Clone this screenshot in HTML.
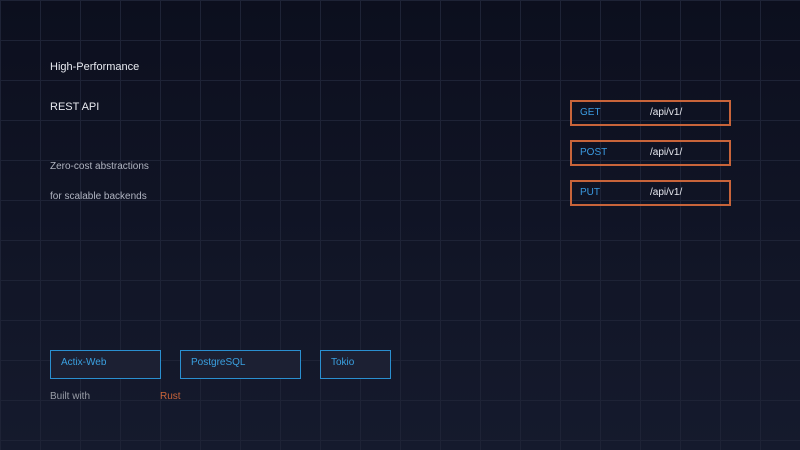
<!DOCTYPE html>
<html><head><style>
body{margin:0;width:800px;height:450px;overflow:hidden;font-family:"Liberation Sans",sans-serif;
background:linear-gradient(#0c0f1e,#151a2d);position:relative}
.grid{position:absolute;inset:0;background-image:linear-gradient(90deg,#1e2336 1px,transparent 1px),linear-gradient(#1e2336 1px,transparent 1px);background-size:40px 40px;background-position:0 0}
.t{position:absolute;font-size:11px;white-space:nowrap}
.r{position:absolute;left:570px;width:157px;height:22px;border:2px solid #c8643a;box-sizing:content-box}
.r span{position:absolute;top:5px;font-size:10px}
.b{position:absolute;top:350px;height:29px;border:1px solid #2a8fd0;background:#1c2033;box-sizing:border-box}
.b span{position:absolute;left:10px;top:6px;font-size:10px;color:#3aa0e0}
</style></head><body>
<div class="grid"></div>
<div class="t" style="left:50px;top:61px;color:#e8eaf0">High-Performance</div>
<div class="t" style="left:50px;top:101px;color:#e8eaf0">REST API</div>
<div class="t" style="left:50px;top:161px;color:#b0b4c0;font-size:10px">Zero-cost abstractions</div>
<div class="t" style="left:50px;top:191px;color:#b0b4c0;font-size:10px">for scalable backends</div>
<div class="r" style="top:100px"><span style="left:8px;color:#3a9ae0">GET</span><span style="left:78px;color:#e8eaf0">/api/v1/</span></div>
<div class="r" style="top:140px"><span style="left:8px;color:#3a9ae0">POST</span><span style="left:78px;color:#e8eaf0">/api/v1/</span></div>
<div class="r" style="top:180px"><span style="left:8px;color:#3a9ae0">PUT</span><span style="left:78px;color:#e8eaf0">/api/v1/</span></div>
<div class="b" style="left:50px;width:111px"><span>Actix-Web</span></div>
<div class="b" style="left:180px;width:121px"><span>PostgreSQL</span></div>
<div class="b" style="left:320px;width:71px"><span>Tokio</span></div>
<div class="t" style="left:50px;top:391px;color:#9a9ea8;font-size:10px">Built with</div>
<div class="t" style="left:160px;top:391px;color:#c8643a;font-size:10px">Rust</div>
</body></html>
